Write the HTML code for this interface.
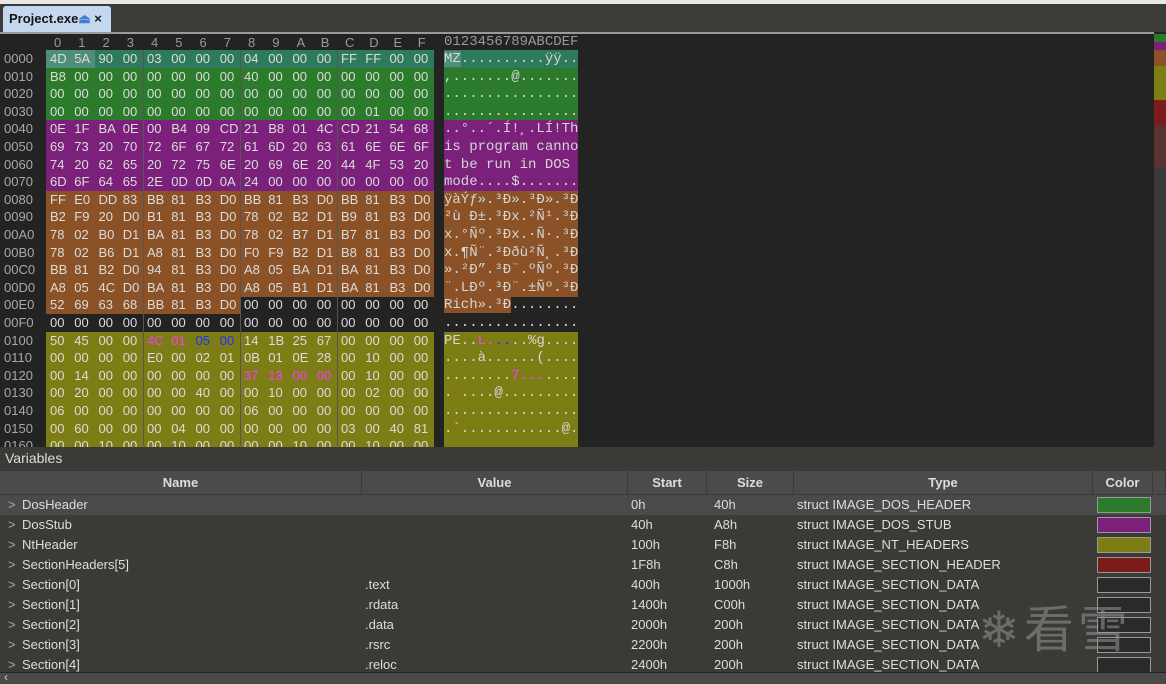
<!DOCTYPE html>
<html><head><meta charset="utf-8"><style>
*{margin:0;padding:0;box-sizing:border-box}
body{width:1166px;height:684px;background:#232323;position:relative;overflow:hidden;font-family:"Liberation Sans",sans-serif;color:#d6d6d6}
.top{position:absolute;left:0;top:0;width:1166px;height:4px;background:#e8e8e8}
.tabbar{position:absolute;left:0;top:4px;width:1166px;height:28px;background:#3c3b37}
.tab{position:absolute;left:3px;top:6px;width:108px;height:26px;background:#c3d8ee;border-radius:3px 3px 0 0;color:#111;font-weight:bold;font-size:13px;padding:5px 0 0 6px}
.line{position:absolute;left:0;top:32px;width:1154px;height:2px;background:#9a9a9a}
.hdr{position:absolute;top:34px;left:0;height:16px;font-size:13px;color:#9a9a9a}
.r{position:absolute;left:0;height:18px;font-size:13px;line-height:18px;white-space:pre}
.r i{position:absolute;left:4px;font-style:normal;color:#a8a8a8}
.h{position:absolute;left:46px;display:flex}
.h b{display:inline-block;width:24.25px;font-weight:normal;padding-left:4px;color:#dcdcdc}
.a{position:absolute;left:444px;font-family:"Liberation Mono",monospace;font-size:14px}
.t{background:#2e7a5c}.s{background:#4f8e78}.g{background:#2c7b2c}.p{background:#7b217b}.o{background:#8a5226}.y{background:#7d7d16}
.h b.m,.m{color:#ff38ff}.h b.bl,.bl{color:#2030ff}
.sep{position:absolute;top:50px;width:1px;height:396px;background:#555}
.mini{position:absolute;left:1154px;width:12px}
.vars{position:absolute;left:0;top:447px;width:1166px;height:237px;background:#3b3a36}
.vt{position:absolute;left:5px;top:3px;font-size:14px;color:#ddd}
.th{position:absolute;top:24px;height:23px;background:#4b4b4b;font-weight:bold;font-size:13px;text-align:center;line-height:23px;border-right:1px solid #3b3a36;color:#ddd}
.row{position:absolute;left:0;width:1166px;height:20px;font-size:13px;line-height:20px;color:#ddd}
.row span{position:absolute}
.row span.ar{left:8px;color:#aaa}
.row span.nm{left:22px}
.sw{position:absolute;left:1097px;width:54px;height:16px;top:2px;border:1px solid #999}
.sb{position:absolute;left:0;top:672px;width:1166px;height:12px;background:#4a4a4a;border-top:1px solid #222}
.wm{position:absolute;left:978px;top:590px;font-size:50px;color:rgba(150,150,150,.55);font-family:"Noto Sans CJK SC",sans-serif;letter-spacing:4px}
</style></head><body>
<div class="top"></div>
<div class="tabbar"></div>
<div class="tab">Project.exe<span style="color:#3f7fd0">⏏</span> ×</div>
<div class="line"></div>
<div class="hdr"><span style="position:absolute;left:46px;top:1px;display:flex;width:388px"><b style="font-weight:normal;display:flex;gap:0">
<span style="width:24.25px;padding-left:8px">0</span><span style="width:24.25px;padding-left:8px">1</span><span style="width:24.25px;padding-left:8px">2</span><span style="width:24.25px;padding-left:8px">3</span><span style="width:24.25px;padding-left:8px">4</span><span style="width:24.25px;padding-left:8px">5</span><span style="width:24.25px;padding-left:8px">6</span><span style="width:24.25px;padding-left:8px">7</span><span style="width:24.25px;padding-left:8px">8</span><span style="width:24.25px;padding-left:8px">9</span><span style="width:24.25px;padding-left:8px">A</span><span style="width:24.25px;padding-left:8px">B</span><span style="width:24.25px;padding-left:8px">C</span><span style="width:24.25px;padding-left:8px">D</span><span style="width:24.25px;padding-left:8px">E</span><span style="width:24.25px;padding-left:8px">F</span></b></span><span style="position:absolute;left:444px;top:0;font-family:'Liberation Mono',monospace;font-size:14px">0123456789ABCDEF</span></div>

<div class="r" style="top:50px"><i>0000</i><div class="h"><b class="s">4D</b><b class="s">5A</b><b class="t">90</b><b class="t">00</b><b class="t">03</b><b class="t">00</b><b class="t">00</b><b class="t">00</b><b class="t">04</b><b class="t">00</b><b class="t">00</b><b class="t">00</b><b class="t">FF</b><b class="t">FF</b><b class="t">00</b><b class="t">00</b></div><span class="a t"><span class="s">MZ</span>..........ÿÿ..</span></div>
<div class="r" style="top:67.6px"><i>0010</i><div class="h"><b class="g">B8</b><b class="g">00</b><b class="g">00</b><b class="g">00</b><b class="g">00</b><b class="g">00</b><b class="g">00</b><b class="g">00</b><b class="g">40</b><b class="g">00</b><b class="g">00</b><b class="g">00</b><b class="g">00</b><b class="g">00</b><b class="g">00</b><b class="g">00</b></div><span class="a g">,.......@.......</span></div>
<div class="r" style="top:85.2px"><i>0020</i><div class="h"><b class="g">00</b><b class="g">00</b><b class="g">00</b><b class="g">00</b><b class="g">00</b><b class="g">00</b><b class="g">00</b><b class="g">00</b><b class="g">00</b><b class="g">00</b><b class="g">00</b><b class="g">00</b><b class="g">00</b><b class="g">00</b><b class="g">00</b><b class="g">00</b></div><span class="a g">................</span></div>
<div class="r" style="top:102.8px"><i>0030</i><div class="h"><b class="g">00</b><b class="g">00</b><b class="g">00</b><b class="g">00</b><b class="g">00</b><b class="g">00</b><b class="g">00</b><b class="g">00</b><b class="g">00</b><b class="g">00</b><b class="g">00</b><b class="g">00</b><b class="g">00</b><b class="g">01</b><b class="g">00</b><b class="g">00</b></div><span class="a g">................</span></div>
<div class="r" style="top:120.4px"><i>0040</i><div class="h"><b class="p">0E</b><b class="p">1F</b><b class="p">BA</b><b class="p">0E</b><b class="p">00</b><b class="p">B4</b><b class="p">09</b><b class="p">CD</b><b class="p">21</b><b class="p">B8</b><b class="p">01</b><b class="p">4C</b><b class="p">CD</b><b class="p">21</b><b class="p">54</b><b class="p">68</b></div><span class="a p">..°..´.Í!¸.LÍ!Th</span></div>
<div class="r" style="top:138px"><i>0050</i><div class="h"><b class="p">69</b><b class="p">73</b><b class="p">20</b><b class="p">70</b><b class="p">72</b><b class="p">6F</b><b class="p">67</b><b class="p">72</b><b class="p">61</b><b class="p">6D</b><b class="p">20</b><b class="p">63</b><b class="p">61</b><b class="p">6E</b><b class="p">6E</b><b class="p">6F</b></div><span class="a p">is program canno</span></div>
<div class="r" style="top:155.6px"><i>0060</i><div class="h"><b class="p">74</b><b class="p">20</b><b class="p">62</b><b class="p">65</b><b class="p">20</b><b class="p">72</b><b class="p">75</b><b class="p">6E</b><b class="p">20</b><b class="p">69</b><b class="p">6E</b><b class="p">20</b><b class="p">44</b><b class="p">4F</b><b class="p">53</b><b class="p">20</b></div><span class="a p">t be run in DOS </span></div>
<div class="r" style="top:173.2px"><i>0070</i><div class="h"><b class="p">6D</b><b class="p">6F</b><b class="p">64</b><b class="p">65</b><b class="p">2E</b><b class="p">0D</b><b class="p">0D</b><b class="p">0A</b><b class="p">24</b><b class="p">00</b><b class="p">00</b><b class="p">00</b><b class="p">00</b><b class="p">00</b><b class="p">00</b><b class="p">00</b></div><span class="a p">mode....$.......</span></div>
<div class="r" style="top:190.8px"><i>0080</i><div class="h"><b class="o">FF</b><b class="o">E0</b><b class="o">DD</b><b class="o">83</b><b class="o">BB</b><b class="o">81</b><b class="o">B3</b><b class="o">D0</b><b class="o">BB</b><b class="o">81</b><b class="o">B3</b><b class="o">D0</b><b class="o">BB</b><b class="o">81</b><b class="o">B3</b><b class="o">D0</b></div><span class="a o">ÿàÝƒ».³Ð».³Ð».³Ð</span></div>
<div class="r" style="top:208.4px"><i>0090</i><div class="h"><b class="o">B2</b><b class="o">F9</b><b class="o">20</b><b class="o">D0</b><b class="o">B1</b><b class="o">81</b><b class="o">B3</b><b class="o">D0</b><b class="o">78</b><b class="o">02</b><b class="o">B2</b><b class="o">D1</b><b class="o">B9</b><b class="o">81</b><b class="o">B3</b><b class="o">D0</b></div><span class="a o">²ù Ð±.³Ðx.²Ñ¹.³Ð</span></div>
<div class="r" style="top:226px"><i>00A0</i><div class="h"><b class="o">78</b><b class="o">02</b><b class="o">B0</b><b class="o">D1</b><b class="o">BA</b><b class="o">81</b><b class="o">B3</b><b class="o">D0</b><b class="o">78</b><b class="o">02</b><b class="o">B7</b><b class="o">D1</b><b class="o">B7</b><b class="o">81</b><b class="o">B3</b><b class="o">D0</b></div><span class="a o">x.°Ñº.³Ðx.·Ñ·.³Ð</span></div>
<div class="r" style="top:243.6px"><i>00B0</i><div class="h"><b class="o">78</b><b class="o">02</b><b class="o">B6</b><b class="o">D1</b><b class="o">A8</b><b class="o">81</b><b class="o">B3</b><b class="o">D0</b><b class="o">F0</b><b class="o">F9</b><b class="o">B2</b><b class="o">D1</b><b class="o">B8</b><b class="o">81</b><b class="o">B3</b><b class="o">D0</b></div><span class="a o">x.¶Ñ¨.³Ððù²Ñ¸.³Ð</span></div>
<div class="r" style="top:261.2px"><i>00C0</i><div class="h"><b class="o">BB</b><b class="o">81</b><b class="o">B2</b><b class="o">D0</b><b class="o">94</b><b class="o">81</b><b class="o">B3</b><b class="o">D0</b><b class="o">A8</b><b class="o">05</b><b class="o">BA</b><b class="o">D1</b><b class="o">BA</b><b class="o">81</b><b class="o">B3</b><b class="o">D0</b></div><span class="a o">».²Ð”.³Ð¨.ºÑº.³Ð</span></div>
<div class="r" style="top:278.8px"><i>00D0</i><div class="h"><b class="o">A8</b><b class="o">05</b><b class="o">4C</b><b class="o">D0</b><b class="o">BA</b><b class="o">81</b><b class="o">B3</b><b class="o">D0</b><b class="o">A8</b><b class="o">05</b><b class="o">B1</b><b class="o">D1</b><b class="o">BA</b><b class="o">81</b><b class="o">B3</b><b class="o">D0</b></div><span class="a o">¨.LÐº.³Ð¨.±Ñº.³Ð</span></div>
<div class="r" style="top:296.4px"><i>00E0</i><div class="h"><b class="o">52</b><b class="o">69</b><b class="o">63</b><b class="o">68</b><b class="o">BB</b><b class="o">81</b><b class="o">B3</b><b class="o">D0</b><b>00</b><b>00</b><b>00</b><b>00</b><b>00</b><b>00</b><b>00</b><b>00</b></div><span class="a"><span class="o">Rich».³Ð</span>........</span></div>
<div class="r" style="top:314px"><i>00F0</i><div class="h"><b>00</b><b>00</b><b>00</b><b>00</b><b>00</b><b>00</b><b>00</b><b>00</b><b>00</b><b>00</b><b>00</b><b>00</b><b>00</b><b>00</b><b>00</b><b>00</b></div><span class="a">................</span></div>
<div class="r" style="top:331.6px"><i>0100</i><div class="h"><b class="y">50</b><b class="y">45</b><b class="y">00</b><b class="y">00</b><b class="y m">4C</b><b class="y m">01</b><b class="y bl">05</b><b class="y bl">00</b><b class="y">14</b><b class="y">1B</b><b class="y">25</b><b class="y">67</b><b class="y">00</b><b class="y">00</b><b class="y">00</b><b class="y">00</b></div><span class="a y">PE..<span class="m">L.</span><span class="bl">..</span>..%g....</span></div>
<div class="r" style="top:349.2px"><i>0110</i><div class="h"><b class="y">00</b><b class="y">00</b><b class="y">00</b><b class="y">00</b><b class="y">E0</b><b class="y">00</b><b class="y">02</b><b class="y">01</b><b class="y">0B</b><b class="y">01</b><b class="y">0E</b><b class="y">28</b><b class="y">00</b><b class="y">10</b><b class="y">00</b><b class="y">00</b></div><span class="a y">....à......(....</span></div>
<div class="r" style="top:366.8px"><i>0120</i><div class="h"><b class="y">00</b><b class="y">14</b><b class="y">00</b><b class="y">00</b><b class="y">00</b><b class="y">00</b><b class="y">00</b><b class="y">00</b><b class="y m">37</b><b class="y m">13</b><b class="y m">00</b><b class="y m">00</b><b class="y">00</b><b class="y">10</b><b class="y">00</b><b class="y">00</b></div><span class="a y">........<span class="m">7...</span>....</span></div>
<div class="r" style="top:384.4px"><i>0130</i><div class="h"><b class="y">00</b><b class="y">20</b><b class="y">00</b><b class="y">00</b><b class="y">00</b><b class="y">00</b><b class="y">40</b><b class="y">00</b><b class="y">00</b><b class="y">10</b><b class="y">00</b><b class="y">00</b><b class="y">00</b><b class="y">02</b><b class="y">00</b><b class="y">00</b></div><span class="a y">. ....@.........</span></div>
<div class="r" style="top:402px"><i>0140</i><div class="h"><b class="y">06</b><b class="y">00</b><b class="y">00</b><b class="y">00</b><b class="y">00</b><b class="y">00</b><b class="y">00</b><b class="y">00</b><b class="y">06</b><b class="y">00</b><b class="y">00</b><b class="y">00</b><b class="y">00</b><b class="y">00</b><b class="y">00</b><b class="y">00</b></div><span class="a y">................</span></div>
<div class="r" style="top:419.6px"><i>0150</i><div class="h"><b class="y">00</b><b class="y">60</b><b class="y">00</b><b class="y">00</b><b class="y">00</b><b class="y">04</b><b class="y">00</b><b class="y">00</b><b class="y">00</b><b class="y">00</b><b class="y">00</b><b class="y">00</b><b class="y">03</b><b class="y">00</b><b class="y">40</b><b class="y">81</b></div><span class="a y">.`............@.</span></div>
<div class="r" style="top:437.2px"><i>0160</i><div class="h"><b class="y">00</b><b class="y">00</b><b class="y">10</b><b class="y">00</b><b class="y">00</b><b class="y">10</b><b class="y">00</b><b class="y">00</b><b class="y">00</b><b class="y">00</b><b class="y">10</b><b class="y">00</b><b class="y">00</b><b class="y">10</b><b class="y">00</b><b class="y">00</b></div><span class="a y">................</span></div>
<div class="sep" style="left:143px"></div><div class="sep" style="left:240px"></div><div class="sep" style="left:337px"></div>

<div class="mini" style="top:34px;height:8px;background:#2c7b2c"></div>
<div class="mini" style="top:42px;height:8px;background:#7b217b"></div>
<div class="mini" style="top:50px;height:16px;background:#8a5226"></div>
<div class="mini" style="top:66px;height:34px;background:#7d7d16"></div>
<div class="mini" style="top:100px;height:25px;background:#7d1a1a"></div>
<div class="mini" style="top:125px;height:42px;background:#5a3232"></div>
<div class="mini" style="top:167px;height:280px;background:#3a3a3a"></div>

<div class="vars">
<div class="vt">Variables</div>
<div class="th" style="left:0;width:362px">Name</div>
<div class="th" style="left:362px;width:266px">Value</div>
<div class="th" style="left:628px;width:79px">Start</div>
<div class="th" style="left:707px;width:87px">Size</div>
<div class="th" style="left:794px;width:299px">Type</div>
<div class="th" style="left:1093px;width:60px">Color</div>
<div class="th" style="left:1153px;width:13px"></div>
</div>
<div class="row" style="top:495px;background:#4a4a4a"><span class="ar">&gt;</span><span class="nm">DosHeader</span><span style="left:631px">0h</span><span style="left:714px">40h</span><span style="left:797px">struct IMAGE_DOS_HEADER</span><div class="sw" style="background:#2c7b2c"></div></div>
<div class="row" style="top:515px"><span class="ar">&gt;</span><span class="nm">DosStub</span><span style="left:631px">40h</span><span style="left:714px">A8h</span><span style="left:797px">struct IMAGE_DOS_STUB</span><div class="sw" style="background:#7b217b"></div></div>
<div class="row" style="top:535px"><span class="ar">&gt;</span><span class="nm">NtHeader</span><span style="left:631px">100h</span><span style="left:714px">F8h</span><span style="left:797px">struct IMAGE_NT_HEADERS</span><div class="sw" style="background:#7d7d16"></div></div>
<div class="row" style="top:555px"><span class="ar">&gt;</span><span class="nm">SectionHeaders[5]</span><span style="left:631px">1F8h</span><span style="left:714px">C8h</span><span style="left:797px">struct IMAGE_SECTION_HEADER</span><div class="sw" style="background:#7d1a1a"></div></div>
<div class="row" style="top:575px"><span class="ar">&gt;</span><span class="nm">Section[0]</span><span style="left:365px">.text</span><span style="left:631px">400h</span><span style="left:714px">1000h</span><span style="left:797px">struct IMAGE_SECTION_DATA</span><div class="sw" style="background:#2a2a2a"></div></div>
<div class="row" style="top:595px"><span class="ar">&gt;</span><span class="nm">Section[1]</span><span style="left:365px">.rdata</span><span style="left:631px">1400h</span><span style="left:714px">C00h</span><span style="left:797px">struct IMAGE_SECTION_DATA</span><div class="sw" style="background:#2a2a2a"></div></div>
<div class="row" style="top:615px"><span class="ar">&gt;</span><span class="nm">Section[2]</span><span style="left:365px">.data</span><span style="left:631px">2000h</span><span style="left:714px">200h</span><span style="left:797px">struct IMAGE_SECTION_DATA</span><div class="sw" style="background:#2a2a2a"></div></div>
<div class="row" style="top:635px"><span class="ar">&gt;</span><span class="nm">Section[3]</span><span style="left:365px">.rsrc</span><span style="left:631px">2200h</span><span style="left:714px">200h</span><span style="left:797px">struct IMAGE_SECTION_DATA</span><div class="sw" style="background:#2a2a2a"></div></div>
<div class="row" style="top:655px;height:17px;overflow:hidden"><span class="ar">&gt;</span><span class="nm">Section[4]</span><span style="left:365px">.reloc</span><span style="left:631px">2400h</span><span style="left:714px">200h</span><span style="left:797px">struct IMAGE_SECTION_DATA</span><div class="sw" style="background:#2a2a2a"></div></div>
<div class="wm">❄看雪</div>
<div class="sb"><span style="position:absolute;left:4px;top:-3px;font-size:12px;color:#ccc">‹</span></div>
</body></html>
